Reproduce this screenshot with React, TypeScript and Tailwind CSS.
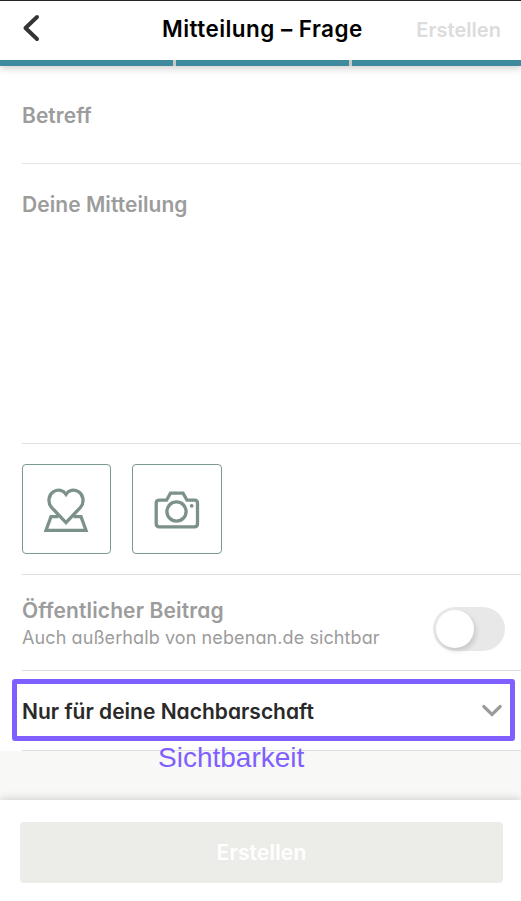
import React from "react";

const round = "[font-feature-settings:'cv11']";

function MapHeartIcon() {
  return (
    <svg width="46" height="46" viewBox="0 0 46 46" fill="none" stroke="#7c9188" strokeWidth="3.3">
      <path d="M15.5 29.7H8L3 43.3H43L38 29.7H30.5" />
      <path d="M23 35.7L8.5 20.3C4.2 15.5 5.6 7.4 10.6 4.6C15.2 2 20.3 3.2 23 7.3C25.7 3.2 30.8 2 35.4 4.6C40.4 7.4 41.8 15.5 37.5 20.3Z" />
    </svg>
  );
}

function CameraIcon() {
  return (
    <svg width="46" height="40" viewBox="0 0 46 40" fill="none" stroke="#7c9188" strokeWidth="3.3">
      <path d="M5.5 10.2H12.5L16.5 3.2H29L33 10.2H40.5Q43.5 10.2 43.5 13.2V33.5Q43.5 36.8 40.5 36.8H5.5Q2.2 36.8 2.2 33.5V13.2Q2.2 10.2 5.5 10.2Z" />
      <circle cx="22.5" cy="21.5" r="9.6" />
      <circle cx="37.7" cy="15.8" r="1.9" fill="#7c9188" stroke="none" />
    </svg>
  );
}

export default function App() {
  return (
    <div className="flex h-[901px] w-[521px] flex-col overflow-hidden bg-white font-['Inter',sans-serif] font-semibold text-[#9c9c9c]">
      <header className="relative z-10 h-[66px] shrink-0 border-t border-[#252328] bg-white shadow-[0_2px_8px_rgba(0,0,0,0.2)]">
        <div className="grid h-[59px] grid-cols-[162px_1fr_auto] items-center pr-[20px]">
          <svg className="mb-[5px] ml-[22px]" width="18" height="28" viewBox="0 0 18 28" fill="none" stroke="#343434" strokeWidth="4" strokeLinecap="round" strokeLinejoin="round">
            <path d="M15 3L3.5 14L15 25" />
          </svg>
          <h1 className="mb-[4px] text-[22.5px] leading-[28px] tracking-[0.45px] whitespace-nowrap text-black"><span>Mitteilung – Frage</span></h1>
          <button className="mb-px text-[20px] leading-[28px] tracking-[0.05px] text-[#dcdcdc]"><span>Erstellen</span></button>
        </div>
        <div className="flex h-[6px] gap-[3px] bg-[#c9c9c6]">
          <div className="w-[173px] bg-[#3e8a9e]" />
          <div className="w-[173px] bg-[#3e8a9e]" />
          <div className="flex-1 bg-[#3e8a9e]" />
        </div>
      </header>

      <main className="flex flex-col pl-[22px] text-[21px] leading-[28px] tracking-[0.05px]">
        <div className="h-[98px] border-b border-[#e6e6e6] pt-[36px]"><span>Betreff</span></div>
        <div className="h-[280px] border-b border-[#e0e0e0] pt-[27px]"><span>Deine Mitteilung</span></div>
        <div className="flex h-[131px] gap-[21px] border-b border-[#e0e0e0] pt-[20px]">
          <button className="flex h-[90px] w-[89px] items-center justify-center rounded-[4px] border border-[#7c9a8e] pt-[2px] pr-[2px]">
            <MapHeartIcon />
          </button>
          <button className="flex h-[90px] w-[90px] items-center justify-center rounded-[4px] border border-[#7c9a8e] pt-[2px]">
            <CameraIcon />
          </button>
        </div>
        <div className="flex h-[96px] items-start justify-between border-b border-[#dddddd] pr-[16px]">
          <div className={`pt-[22px] ${round}`}>
            <div className="tracking-[0.12px]"><span>Öffentlicher Beitrag</span></div>
            <div className="text-[18px] leading-[26px] font-normal tracking-[0.1px]"><span>Auch außerhalb von nebenan.de sichtbar</span></div>
          </div>
          <button className="mt-[32px] h-[44px] w-[72px] rounded-full bg-[#e8e8e8] p-[3px]">
            <span className="block size-[38px] rounded-full bg-white shadow-[2px_3px_5px_rgba(0,0,0,0.14)]" />
          </button>
        </div>
        <div className="relative flex h-[80px] items-center justify-between border-b border-[#dedede] pr-[18px] text-[#292929]">
          <span className={`pt-[2px] tracking-[0px] ${round}`}>Nur für deine Nachbarschaft</span>
          <svg width="22" height="16" viewBox="0 0 22 16" fill="none" stroke="#9c9c9c" strokeWidth="3.2" strokeLinecap="round">
            <path d="M2.8 3.5L11 11.5L19.2 3.5" />
          </svg>
          <div className="absolute top-[7.5px] -left-[10.5px] h-[62px] w-[503px] rounded-[3px] border-[5px] border-[#7f5fff]" />
          <div className="absolute top-[71px] left-[136px] font-['Liberation_Sans',Arial,sans-serif] text-[28px] leading-[32px] font-normal tracking-[0px] whitespace-nowrap text-[#7f5fff]"><span>Sichtbarkeit</span></div>
        </div>
      </main>

      <div className="h-[49px] shrink-0 bg-[#f8f8f6]" />
      <footer className="flex-1 bg-white pt-[22px] pr-[18px] pl-[20px] shadow-[0_-2px_8px_rgba(0,0,0,0.14)]">
        <button className="flex h-[61px] w-full items-center justify-center rounded-[4px] bg-[#ecede8] text-[21px] leading-[28px] tracking-[0.15px] text-white"><span>Erstellen</span></button>
      </footer>
    </div>
  );
}
